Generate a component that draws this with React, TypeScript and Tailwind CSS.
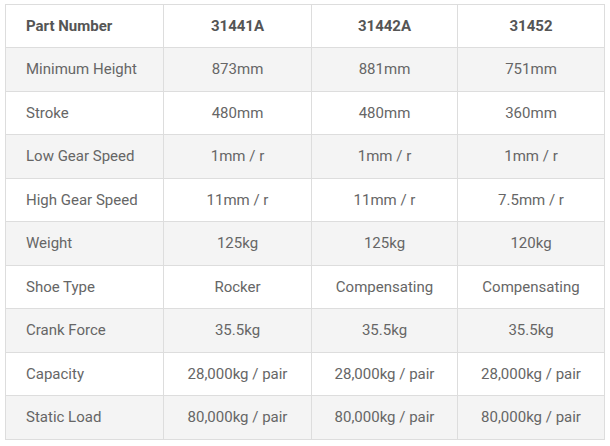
import React from "react";

const header = ["Part Number", "31441A", "31442A", "31452"];
const rows: string[][] = [
  ["Minimum Height", "873mm", "881mm", "751mm"],
  ["Stroke", "480mm", "480mm", "360mm"],
  ["Low Gear Speed", "1mm / r", "1mm / r", "1mm / r"],
  ["High Gear Speed", "11mm / r", "11mm / r", "7.5mm / r"],
  ["Weight", "125kg", "125kg", "120kg"],
  ["Shoe Type", "Rocker", "Compensating", "Compensating"],
  ["Crank Force", "35.5kg", "35.5kg", "35.5kg"],
  ["Capacity", "28,000kg / pair", "28,000kg / pair", "28,000kg / pair"],
  ["Static Load", "80,000kg / pair", "80,000kg / pair", "80,000kg / pair"],
];

export default function App() {
  return (
    <div
      className="w-[610px] h-[446px] bg-white pl-[5px] pt-[4px]"
      style={{ fontFamily: "Roboto, 'Liberation Sans', sans-serif" }}
    >
      <div className="w-[600px] border border-[#dddddd] text-[15px]">
        <div className="grid grid-cols-[158px_148px_146px_1fr] h-[42px] bg-white text-[#555555] font-bold">
          {header.map((h, i) => (
            <div
              key={i}
              className={
                "flex items-center " +
                (i === 0 ? "pl-[20px] border-r border-[#dddddd]" : "justify-center") +
                (i > 0 && i < 3 ? " border-r border-[#dddddd]" : "")
              }
            >
              {h}
            </div>
          ))}
        </div>
        {rows.map((r, ri) => (
          <div
            key={ri}
            className={
              "grid grid-cols-[158px_148px_146px_1fr] border-t border-[#dddddd] text-[#666666] " +
              (ri % 2 === 0 ? "h-[44px] bg-[#f4f4f4]" : "h-[43px] bg-white")
            }
          >
            {r.map((c, ci) => (
              <div
                key={ci}
                className={
                  "flex items-center " +
                  (ci === 0 ? "pl-[20px]" : "justify-center") +
                  (ci < 3 ? " border-r border-[#dddddd]" : "")
                }
              >
                {c}
              </div>
            ))}
          </div>
        ))}
      </div>
    </div>
  );
}
